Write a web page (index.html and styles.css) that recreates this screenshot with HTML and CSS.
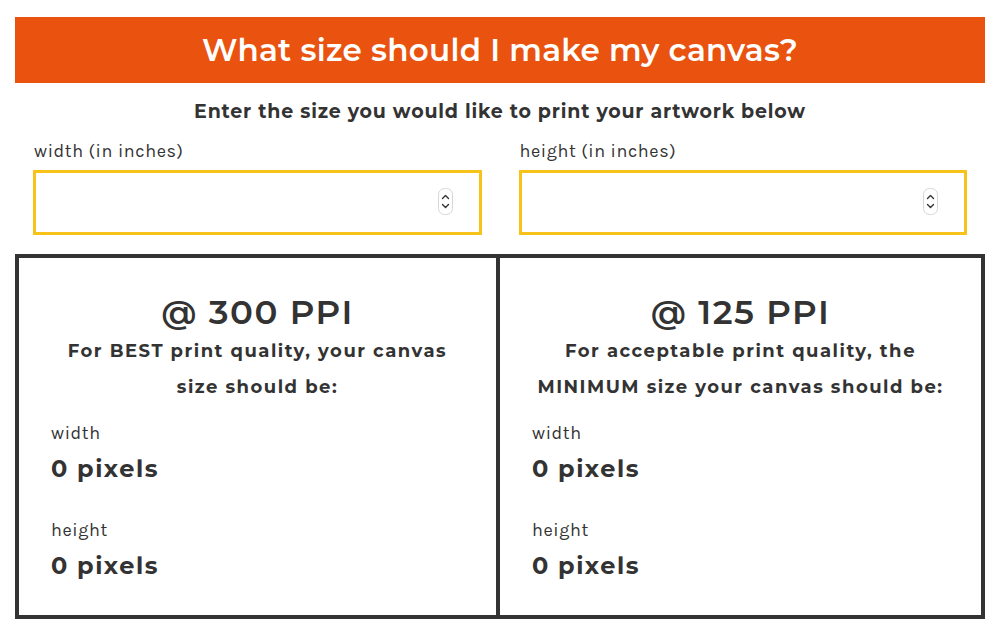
FILE: index.html
```html
<!DOCTYPE html>
<html lang="en">
    <head>
	<title>Canvas size calculator</title>
	<meta charset="UTF-8"/>
	<link rel="stylesheet" href="styles.css">
    </head>
    <body>
	<div class="calc">
	    <h1 class="banner">What size should I make my canvas?</h1>
	    <p class="intro">Enter the size you would like to print your artwork below</p>
	    <div class="fields">
		<div class="field">
		    <label for="w">width (in inches)</label>
		    <div class="box-input">
			<input id="w" type="number">
			<svg class="spin" width="15" height="27" viewBox="0 0 15 27"><rect x="0.5" y="0.5" width="14" height="26" rx="6" fill="white" stroke="#d6d6d6"/><path d="M4.5 10.5 L7.5 7.5 L10.5 10.5 M4.5 16.5 L7.5 19.5 L10.5 16.5" fill="none" stroke="#333" stroke-width="1.4" stroke-linecap="round" stroke-linejoin="round"/></svg>
		    </div>
		</div>
		<div class="field">
		    <label for="h">height (in inches)</label>
		    <div class="box-input">
			<input id="h" type="number">
			<svg class="spin" width="15" height="27" viewBox="0 0 15 27"><rect x="0.5" y="0.5" width="14" height="26" rx="6" fill="white" stroke="#d6d6d6"/><path d="M4.5 10.5 L7.5 7.5 L10.5 10.5 M4.5 16.5 L7.5 19.5 L10.5 16.5" fill="none" stroke="#333" stroke-width="1.4" stroke-linecap="round" stroke-linejoin="round"/></svg>
		    </div>
		</div>
	    </div>
	    <div class="results">
		<div class="result">
		    <h2>@ 300 PPI</h2>
		    <p class="note">For BEST print quality, your canvas size should be:</p>
		    <div class="dim">width</div>
		    <div class="px" id="w300">0 pixels</div>
		    <div class="dim">height</div>
		    <div class="px" id="h300">0 pixels</div>
		</div>
		<div class="result">
		    <h2>@ 125 PPI</h2>
		    <p class="note">For acceptable print quality, the MINIMUM size your canvas should be:</p>
		    <div class="dim">width</div>
		    <div class="px" id="w125">0 pixels</div>
		    <div class="dim">height</div>
		    <div class="px" id="h125">0 pixels</div>
		</div>
	    </div>
	</div>
	<script>
	    function atualizar () {
		var w = parseFloat(document.getElementById('w').value) || 0
		var h = parseFloat(document.getElementById('h').value) || 0
		document.getElementById('w300').textContent = Math.round(w * 300) + ' pixels'
		document.getElementById('h300').textContent = Math.round(h * 300) + ' pixels'
		document.getElementById('w125').textContent = Math.round(w * 125) + ' pixels'
		document.getElementById('h125').textContent = Math.round(h * 125) + ' pixels'
	    }
	    document.getElementById('w').addEventListener('input', atualizar)
	    document.getElementById('h').addEventListener('input', atualizar)
	</script>
    </body>
</html>
```

FILE: styles.css
```css
body {
    margin: 0;
    background: white;
    color: #333;
    font-family: "Montserrat", "Inter", "DejaVu Sans", sans-serif;
}
.calc {
    padding: 17px 15px 0;
}
.banner {
    margin: 0;
    height: 66px;
    line-height: 66px;
    background: #e9530f;
    color: white;
    text-align: center;
    font-size: 31px;
    font-weight: 600;
    letter-spacing: 0.3px;
}
.intro {
    margin: 17px 0 0;
    text-align: center;
    font-size: 19px;
    font-weight: 700;
    letter-spacing: 0.8px;
    line-height: 24px;
}
.fields {
    display: grid;
    grid-template-columns: 1fr 1fr;
    gap: 37px;
    padding: 0 18px;
    margin-top: 15px;
}
.field label {
    display: block;
    font-family: "Karla", "Lato", sans-serif;
    font-size: 18px;
    letter-spacing: 0.6px;
    line-height: 24px;
    padding-left: 1px;
    margin-bottom: 7px;
}
.box-input {
    position: relative;
}
.box-input input {
    display: block;
    box-sizing: border-box;
    width: 100%;
    height: 65px;
    border: 3px solid #f7c21a;
    outline: none;
    font-size: 17px;
    padding: 0 12px;
    -moz-appearance: textfield;
}
.box-input input::-webkit-inner-spin-button,
.box-input input::-webkit-outer-spin-button {
    -webkit-appearance: none;
    margin: 0;
}
.spin {
    position: absolute;
    right: 29px;
    top: 18px;
}
.results {
    margin-top: 19px;
    display: grid;
    grid-template-columns: 1fr 1fr;
    border: 4px solid #333;
    height: 357px;
}
.result {
    padding: 0 32px 0 32px;
}
.result:first-child {
    border-right: 4px solid #333;
}
.result h2 {
    margin: 33px 0 0;
    text-align: center;
    font-size: 34px;
    font-weight: 600;
    letter-spacing: 1.5px;
    line-height: 42px;
}
.note {
    margin: 0;
    text-align: center;
    font-size: 18px;
    font-weight: 700;
    letter-spacing: 1.5px;
    line-height: 36px;
}
.dim {
    margin-top: 16px;
    font-family: "Karla", "Lato", sans-serif;
    font-size: 18px;
    letter-spacing: 0.6px;
    line-height: 24px;
}
.px {
    margin-top: 9px;
    font-size: 24px;
    font-weight: 700;
    letter-spacing: 1.5px;
    line-height: 30px;
}
.px + .dim {
    margin-top: 34px;
}
```
